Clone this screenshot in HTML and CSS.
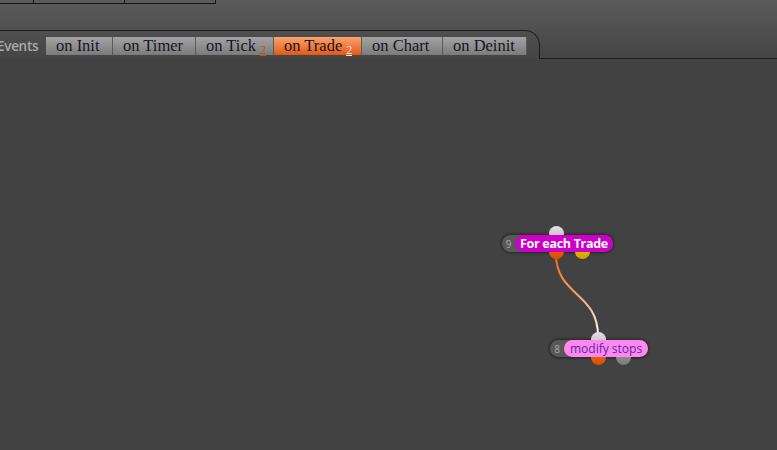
FILE: index.html
```html
<!DOCTYPE html>
<html>
<head>
<meta charset="utf-8">
<link rel="stylesheet" href="styles.css">
</head>
<body>
<div class="header">
  <div class="toptable">
    <div class="cell c1"></div>
    <div class="cell c2"></div>
    <div class="cell c3"></div>
  </div>
  <div class="tabrow">
    <div class="panel">
      <span class="events">Events</span>
      <div class="tabs">
        <div class="tab t-init">on Init</div>
        <div class="tab t-timer">on Timer</div>
        <div class="tab t-tick">on Tick <span class="cnt">2</span></div>
        <div class="tab t-trade active">on Trade <span class="cnt">2</span></div>
        <div class="tab t-chart">on Chart</div>
        <div class="tab t-deinit">on Deinit</div>
      </div>
    </div>
    <div class="filler"></div>
  </div>
</div>
<div class="canvas">
  <svg class="wire" width="777" height="391" viewBox="0 59 777 391">
    <defs>
      <linearGradient id="wg" x1="0" y1="255" x2="0" y2="335" gradientUnits="userSpaceOnUse">
        <stop offset="0" stop-color="#f06a10"/>
        <stop offset="0.5" stop-color="#f8a070"/>
        <stop offset="1" stop-color="#ffffff"/>
      </linearGradient>
    </defs>
    <path d="M556,254 C556,296 598,292 598,336" fill="none" stroke="url(#wg)" stroke-width="2"/>
  </svg>
  <div class="node n1">
    <span class="dot in"></span>
    <span class="dot out orange"></span>
    <span class="dot out yellow"></span>
    <span class="num">9</span>
    <span class="label loop">For each Trade</span>
  </div>
  <div class="node n2">
    <span class="dot in"></span>
    <span class="dot out orange"></span>
    <span class="dot out grey"></span>
    <span class="num">8</span>
    <span class="label action">modify stops</span>
  </div>
</div>
</body>
</html>
```
FILE: styles.css
```css
html, body {
  margin: 0;
  padding: 0;
}
body {
  width: 777px;
  height: 450px;
  overflow: hidden;
  background: #424242;
  font-family: "Open Sans", "DejaVu Sans", sans-serif;
}
.header {
  height: 59px;
  background: linear-gradient(#5b5b5b, #444444);
  display: flex;
  flex-direction: column;
}
.toptable {
  display: flex;
  height: 3px;
  width: 216px;
  border-bottom: 1px solid #141414;
}
.cell {
  border-right: 1px solid #141414;
}
.c1 { width: 33px; }
.c2 { width: 90px; }
.c3 { width: 90px; }
.tabrow {
  margin-top: 26px;
  display: flex;
  height: 29px;
}
.panel {
  width: 539px;
  flex: none;
  border-top: 1px solid #1c1c1c;
  border-right: 1px solid #1c1c1c;
  border-top-right-radius: 15px;
  display: flex;
  align-items: flex-start;
  padding-top: 6px;
}
.filler {
  flex: 1;
  border-bottom: 1px solid #1c1c1c;
}
.events {
  margin-left: -3px;
  width: 49px;
  font-family: "Open Sans", sans-serif;
  font-weight: 600;
  font-size: 13.5px;
  letter-spacing: -0.3px;
  color: #a9a9a9;
  line-height: 18px;
}
.tabs {
  display: flex;
}
.tab {
  box-sizing: border-box;
  height: 18px;
  line-height: 18px;
  padding-left: 10px;
  font-family: "Liberation Serif", "DejaVu Serif", serif;
  font-size: 16.5px;
  color: #15151f;
  background: linear-gradient(#a3a3a3, #7b7b7b);
  border-right: 1px solid #5a5a5a;
  white-space: nowrap;
}
.t-init { width: 67px; }
.t-timer { width: 83px; }
.t-tick { width: 78px; }
.t-trade { width: 88px; }
.t-chart { width: 81px; }
.t-deinit { width: 84px; }
.tab.active {
  background: linear-gradient(#f9a472, #e25818);
  color: #24120a;
}
.cnt {
  display: inline-block;
  font-size: 12px;
  line-height: 10px;
  position: relative;
  top: 3px;
  color: #b85418;
  border-bottom: 1px solid currentColor;
}
.tab.active .cnt {
  color: #ffe6d6;
}
.canvas {
  position: relative;
  height: 391px;
}
.wire {
  position: absolute;
  left: 0;
  top: 0;
}
.node {
  position: absolute;
  display: flex;
  align-items: center;
  height: 17px;
  background: #585858;
  border-radius: 9px;
  box-shadow: 0 0 3px 1px rgba(0, 0, 0, 0.45);
}
.n1 { left: 502px; top: 176px; }
.n2 { left: 550px; top: 281px; }
.num {
  position: relative;
  z-index: 2;
  width: 13px;
  text-align: center;
  font-size: 10px;
  color: #a8a8a8;
}
.n2 .num { width: 14px; }
.label {
  position: relative;
  z-index: 2;
  height: 17px;
  line-height: 17px;
  border-radius: 9px;
  font-size: 12.5px;
  padding: 0 5px;
  white-space: nowrap;
}
.loop {
  background: #cc00c8;
  color: #ffffff;
  font-weight: 700;
  letter-spacing: -0.3px;
}
.action {
  background: #ff88f0;
  color: #5a2aa0;
  padding: 0 6px 0 6px;
  font-size: 12px;
}
.dot {
  position: absolute;
  z-index: 1;
  width: 15px;
  height: 15px;
  border-radius: 50%;
}
.dot.in {
  background: linear-gradient(#e8e2ea, #b8b0bc);
}
.orange { background: linear-gradient(#f06a10, #d84e00); }
.yellow { background: linear-gradient(#f0c800, #d0a000); }
.grey { background: linear-gradient(#9a9a9a, #7a7a7a); }
.n1 .dot.in { left: 47px; top: -9px; }
.n1 .orange { left: 47px; top: 9px; }
.n1 .yellow { left: 73px; top: 9px; }
.n2 .dot.in { left: 41px; top: -8px; }
.n2 .orange { left: 41px; top: 10px; }
.n2 .grey { left: 66px; top: 10px; }
```
